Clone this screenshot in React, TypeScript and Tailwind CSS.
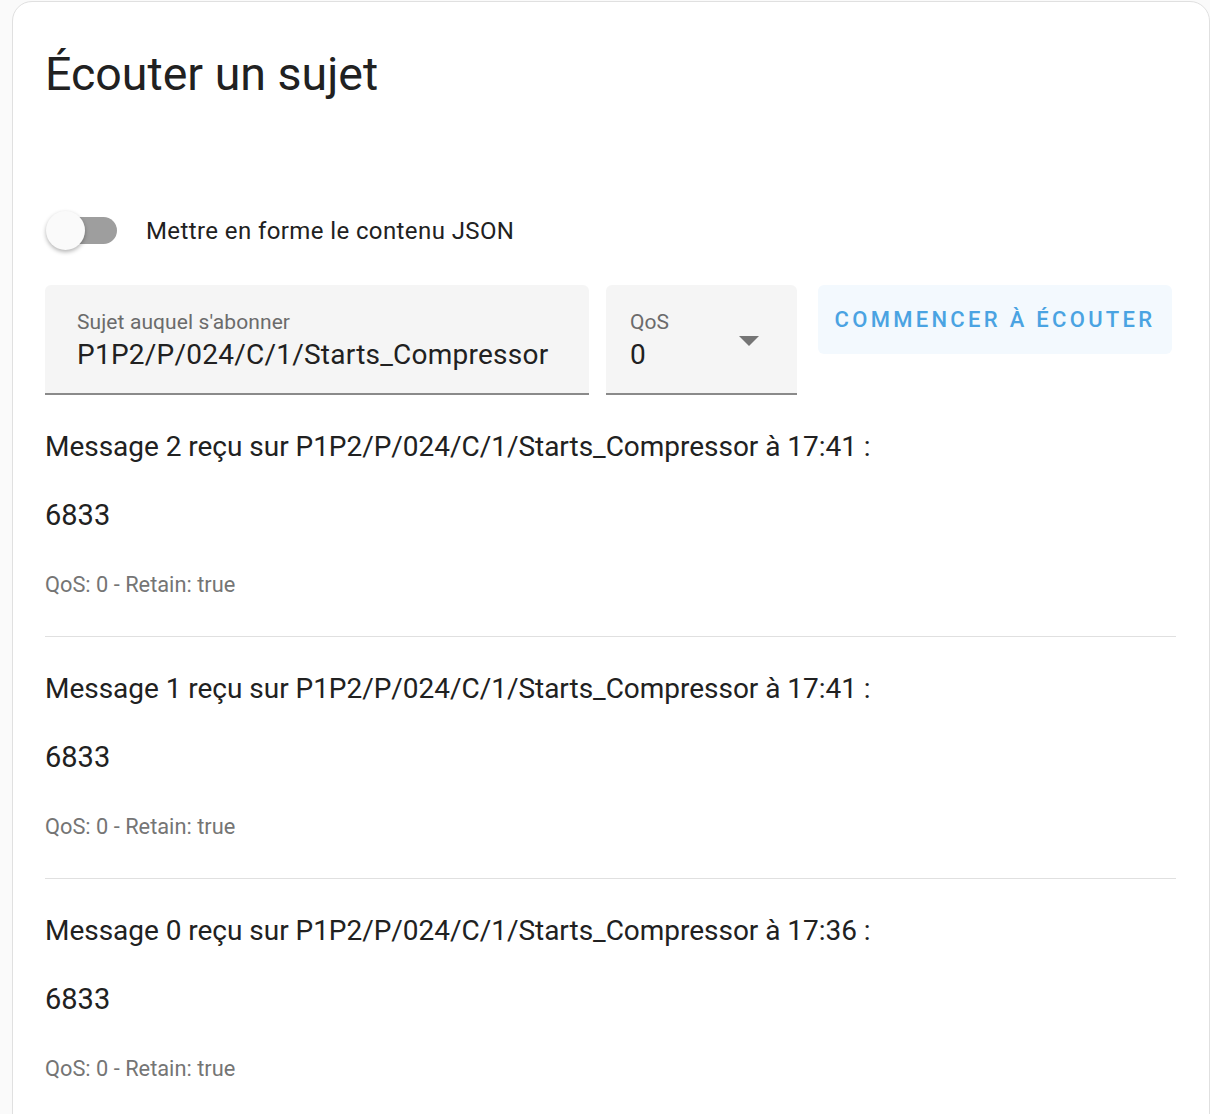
import React from "react";

const messages = [
  { n: 2, time: "17:41" },
  { n: 1, time: "17:41" },
  { n: 0, time: "17:36" },
];

export default function App() {
  return (
    <div
      className="w-[1210px] h-[1114px] overflow-hidden bg-[#fafafa] pl-[12px] pt-[1px]"
      style={{ fontFamily: "Roboto, 'Noto Sans', sans-serif" }}
    >
      <div className="w-[1198px] min-h-[1200px] bg-white border border-[#e0e0e0] rounded-[20px] pl-[32px] pr-[32px] pt-[44px] text-[#212121]">
        <h1 className="text-[46.5px] leading-[56px] font-normal">Écouter un sujet</h1>

        <div className="mt-[107px] h-[44px] flex items-center">
          <div className="relative w-[75px] h-[44px] flex items-center">
            <div className="absolute left-[7px] top-[8px] w-[65px] h-[27px] rounded-full bg-[#9e9e9e]" />
            <div className="absolute left-[1px] top-[2px] w-[39px] h-[39px] rounded-full bg-[#fafafa] shadow-[0_2px_4px_rgba(0,0,0,0.3)]" />
          </div>
          <span className="ml-[26px] text-[24px] tracking-[0.4px] leading-[44px]">
            Mettre en forme le contenu JSON
          </span>
        </div>

        <div className="mt-[32px] flex items-start">
          <div className="w-[544px] h-[110px] bg-[#f5f5f5] rounded-t-[6px] border-b-2 border-[#8a8a8a] px-[32px] pt-[24px]">
            <div className="text-[21px] leading-[26px] text-[#6b6b6b] tracking-[0.1px]">Sujet auquel s'abonner</div>
            <div className="text-[28px] leading-[36px] tracking-[0.24px] mt-[2px]">P1P2/P/024/C/1/Starts_Compressor</div>
          </div>
          <div className="ml-[17px] w-[191px] h-[110px] bg-[#f5f5f5] rounded-t-[6px] border-b-2 border-[#8a8a8a] pl-[24px] pr-[38px] pt-[24px] flex justify-between">
            <div>
              <div className="text-[21px] leading-[26px] text-[#6b6b6b]">QoS</div>
              <div className="text-[28px] leading-[36px] mt-[2px]">0</div>
            </div>
            <svg width="20" height="10" viewBox="0 0 20 10" className="mt-[27px]">
              <path d="M0 0 L20 0 L10 10 Z" fill="#757575" />
            </svg>
          </div>
          <div className="ml-[21px] w-[354px] h-[69px] rounded-[6px] bg-[#f3f9fe] flex items-center justify-center">
            <span className="text-[22px] font-medium tracking-[3.3px] text-[#4aa3e2]">COMMENCER À ÉCOUTER</span>
          </div>
        </div>

        <div className="mt-[34px] w-[1131px]">
          {messages.map((m, i) => (
            <div key={m.n}>
              {i > 0 && <div className="h-px bg-[#e0e0e0] mt-[36px] mb-[34px]" />}
              <div className="text-[28px] leading-[36px] tracking-[-0.03px]">
                Message {m.n} reçu sur P1P2/P/024/C/1/Starts_Compressor à {m.time} :
              </div>
              <div className="mt-[32px] text-[29px] leading-[36px]">6833</div>
              <div className="mt-[37px] text-[21.8px] leading-[30px] text-[#757575]">QoS: 0 - Retain: true</div>
            </div>
          ))}
        </div>
      </div>
    </div>
  );
}
